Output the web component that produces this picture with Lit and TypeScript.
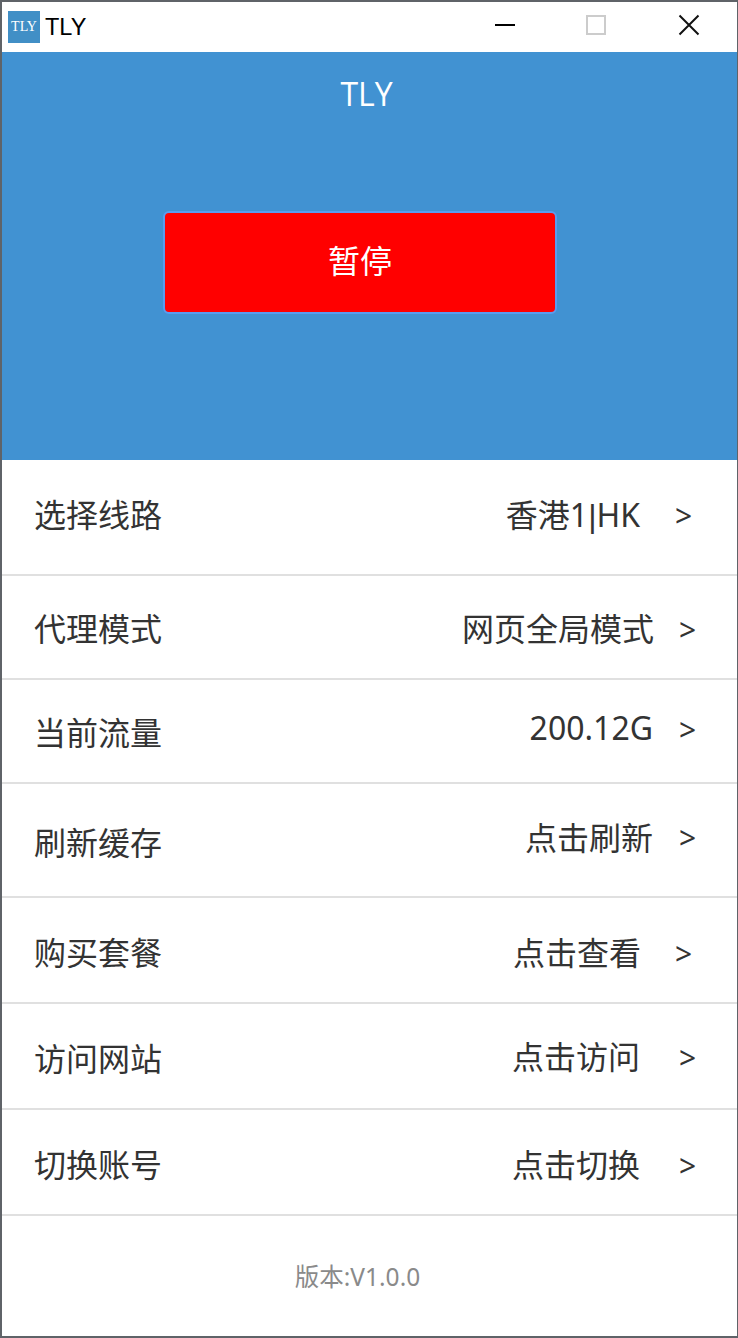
import { LitElement, html, css, TemplateResult } from 'lit'
import { customElement } from 'lit/decorators.js'

interface Row {
  label: string
  value: string | TemplateResult
  height: number
  // vertical nudges of each side, the original layout is a bit uneven
  labelDy: number
  valueDy: number
  arrowDy: number
  valueGap: number
  arrowRight: number
}

const ROWS: Row[] = [
  { label: '选择线路', value: html`香港1<span class="pipe">|</span>HK`, height: 116, labelDy: -4, valueDy: -4, arrowDy: -1, valueGap: 34, arrowRight: 47 },
  { label: '代理模式', value: '网页全局模式', height: 104, labelDy: 0, valueDy: 0, arrowDy: 3, valueGap: 24, arrowRight: 43 },
  { label: '当前流量', value: '200.12G', height: 104, labelDy: 0, valueDy: -4, arrowDy: -1, valueGap: 25, arrowRight: 43 },
  { label: '刷新缓存', value: '点击刷新', height: 114, labelDy: 1, valueDy: -4, arrowDy: -2, valueGap: 25, arrowRight: 43 },
  { label: '购买套餐', value: '点击查看', height: 106, labelDy: 1, valueDy: 1, arrowDy: 4, valueGap: 33, arrowRight: 47 },
  { label: '访问网站', value: '点击访问', height: 106, labelDy: 1, valueDy: -1, arrowDy: 2, valueGap: 38, arrowRight: 43 },
  { label: '切换账号', value: '点击切换', height: 106, labelDy: 1, valueDy: 1, arrowDy: 4, valueGap: 38, arrowRight: 43 },
]

@customElement('app-root')
export class AppRoot extends LitElement {
  static styles = css`
    :host {
      display: block;
      width: 738px;
      height: 1338px;
      font-family: 'Noto Sans', 'Noto Sans CJK SC', sans-serif;
    }
    .window {
      box-sizing: border-box;
      height: 1338px;
      display: flex;
      flex-direction: column;
      background: #fff;
      border: 2px solid #5f6368;
      border-right-width: 1px;
    }
    .titlebar {
      flex: none;
      height: 50px;
      display: flex;
      align-items: center;
      padding-left: 6px;
      color: #000;
    }
    .logo {
      width: 32px;
      height: 32px;
      display: flex;
      align-items: center;
      justify-content: center;
      background: #418fc6;
      color: #fff;
      font-family: 'Liberation Serif', serif;
      font-size: 14px;
    }
    .app-name {
      margin-left: 5px;
      font-family: 'Liberation Sans', sans-serif;
      font-size: 23.5px;
    }
    .controls {
      margin-left: auto;
      margin-bottom: 4px;
      display: flex;
      align-items: center;
    }
    .controls svg {
      display: block;
      width: 22px;
      height: 22px;
    }
    .min { margin-right: 69px; }
    .max { margin-right: 71px; }
    .close { margin-right: 37px; }
    .hero {
      flex: none;
      height: 408px;
      display: flex;
      flex-direction: column;
      align-items: center;
      background: #4192d2;
      color: #fff;
    }
    .hero-title {
      margin-top: 21px;
      height: 42px;
      line-height: 42px;
      font-size: 32px;
      font-family: 'Open Sans', 'Noto Sans CJK SC', sans-serif;
      transform: translateX(-3px);
    }
    .pause {
      box-sizing: border-box;
      width: 394px;
      height: 103px;
      margin: 96px 0 0 -19px;
      padding-bottom: 8px;
      display: flex;
      align-items: center;
      justify-content: center;
      background: #f00;
      border: 2px solid #5a9cf0;
      border-radius: 6px;
      font-size: 32px;
      color: #fff;
    }
    .row {
      flex: none;
      box-sizing: border-box;
      display: flex;
      align-items: center;
      padding-left: 32px;
      border-bottom: 2px solid #e0e0e0;
      font-size: 32px;
      color: #333;
    }
    .label { flex: 1; }
    .pipe { font-family: 'Liberation Sans', sans-serif; }
    .arrow {
      font-size: 30px;
      width: 16px;
      line-height: 1;
    }
    .version {
      flex: 1;
      display: flex;
      align-items: center;
      justify-content: center;
      padding-right: 24px;
      font-size: 24.5px;
      color: #8a8a8a;
      transform: translateY(-1px);
    }
  `

  private renderRow(row: Row) {
    return html`
      <div class="row" style="height:${row.height}px;padding-right:${row.arrowRight - 1}px">
        <span class="label" style="transform:translateY(${row.labelDy}px)">${row.label}</span>
        <span style="margin-right:${row.valueGap + 1}px;transform:translateY(${row.valueDy}px)">${row.value}</span>
        <span class="arrow" style="transform:translateY(${row.arrowDy}px)">&gt;</span>
      </div>
    `
  }

  render() {
    return html`
      <div class="window">
        <div class="titlebar">
          <div class="logo">TLY</div>
          <div class="app-name">TLY</div>
          <div class="controls">
            <svg class="min" viewBox="0 0 22 22"><path d="M1 11h20" stroke="#000" stroke-width="2" fill="none"/></svg>
            <svg class="max" viewBox="0 0 22 22"><rect x="2" y="2" width="18" height="18" stroke="#ccc" stroke-width="2" fill="none"/></svg>
            <svg class="close" viewBox="0 0 22 22"><path d="M1.5 1.5l19 19M20.5 1.5l-19 19" stroke="#111" stroke-width="2" fill="none"/></svg>
          </div>
        </div>
        <div class="hero">
          <div class="hero-title">TLY</div>
          <div class="pause">暂停</div>
        </div>
        ${ROWS.map((row) => this.renderRow(row))}
        <div class="version">版本:V1.0.0</div>
      </div>
    `
  }
}
